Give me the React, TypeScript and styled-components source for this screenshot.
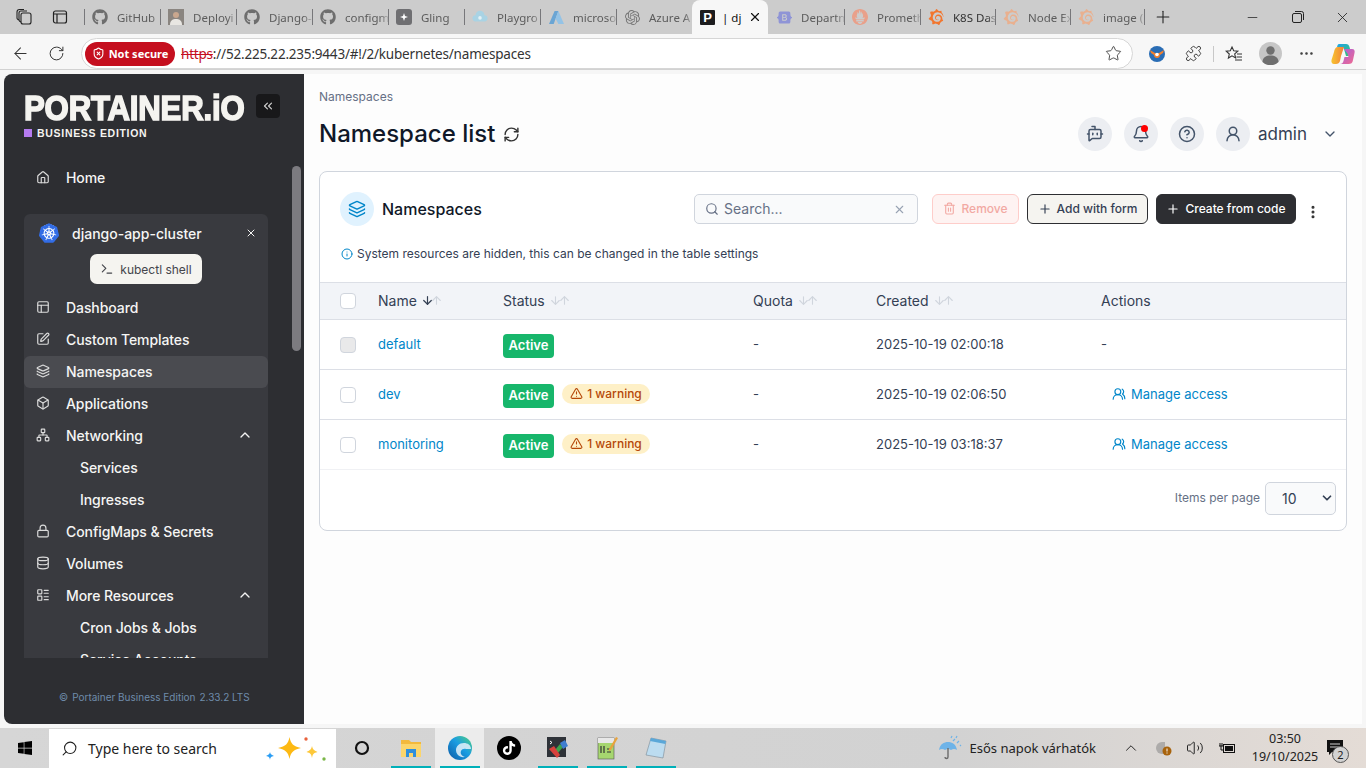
import * as React from 'react';
import styled, { createGlobalStyle } from 'styled-components';
import {
  ArrowDown, ArrowLeft, ArrowUp, BotMessageSquare, Bell, Box, ChevronDown, ChevronUp, ChevronsLeft,
  CircleHelp, Database, EllipsisVertical, Ellipsis, Info, Layers, LayoutList, Lock, Minus, Network,
  PanelsTopLeft, Plus, Puzzle, RefreshCw, RotateCw, Search, ShieldX, SquarePen, Star, Terminal, Trash2,
  TriangleAlert, House, UserRound, UsersRound, Volume2, X,
} from 'lucide-react';
import { FaGithub, FaTiktok, FaWindows } from 'react-icons/fa';
import { SiGrafana, SiKubernetes, SiOpenai, SiPrometheus, SiBootstrap } from 'react-icons/si';

const GlobalStyle = createGlobalStyle`
  html, body { margin: 0; padding: 0; overflow: hidden; }
  * { box-sizing: border-box; }
  body { font-family: Inter, "Liberation Sans", sans-serif; }
`;

const Screen = styled.div`
  width: 1366px;
  height: 768px;
  display: flex;
  flex-direction: column;
  overflow: hidden;
  background: #f6f6f6;
`;

/* browser chrome */
const TabStrip = styled.div`
  height: 34px;
  display: flex;
  align-items: center;
  background: #cccccc;
  font-family: "Noto Sans", sans-serif;
  font-size: 11.5px;
`;

const StripIcons = styled.div`
  width: 84px;
  display: flex;
  align-items: center;
  padding-left: 15px;
  gap: 19px;
  color: #222;
`;

const Tab = styled.div<{ $w: number; $sep: boolean; $end?: boolean }>`
  width: ${(p) => p.$w}px;
  height: 16px;
  flex: none;
  display: flex;
  align-items: center;
  gap: 9px;
  padding-left: 7px;
  border-left: 1px solid ${(p) => (p.$sep ? '#77777a' : 'transparent')};
  border-right: ${(p) => (p.$end ? '1px solid #77777a' : 'none')};
`;

const TabIcon = styled.div`
  width: 16px;
  height: 16px;
  flex: none;
  display: flex;
  align-items: center;
  justify-content: center;
`;

const TabLabel = styled.div<{ $dark?: boolean }>`
  width: 43px;
  overflow: hidden;
  white-space: nowrap;
  color: ${(p) => (p.$dark ? '#333' : '#5c5c5c')};
  mask-image: linear-gradient(to right, #000 80%, rgba(0, 0, 0, 0.25));
`;

const ActiveTab = styled.div`
  width: 76px;
  height: 34px;
  flex: none;
  display: flex;
  align-items: center;
  padding-left: 8px;
  background: #f7f7f7;
  border-radius: 8px 8px 0 0;
  color: #111;
`;

const PortainerFav = styled.div`
  width: 15px;
  height: 15px;
  flex: none;
  background: #1c1c1e;
  color: #fff;
  font-family: "Liberation Sans", sans-serif;
  font-weight: 700;
  font-size: 13px;
  line-height: 15px;
  text-align: center;
  border-radius: 1px;
`;

const ActiveLabel = styled.div`
  width: 26px;
  margin-left: 7px;
  white-space: nowrap;
  overflow: hidden;
`;

const NewTab = styled.div`
  width: 36px;
  display: flex;
  justify-content: center;
  color: #222;
`;

const WindowControls = styled.div`
  margin-left: auto;
  margin-right: 1px;
  display: flex;
  color: #222;
`;

const WindowButton = styled.div`
  width: 45px;
  display: flex;
  justify-content: center;
  align-items: center;
`;

const Toolbar = styled.div`
  height: 36px;
  display: flex;
  align-items: center;
  padding: 4px 0 0 2px;
  background: #f7f7f7;
  border-bottom: 1px solid #d2d2d2;
  color: #333;
`;

const ToolButton = styled.div<{ $w?: number }>`
  width: ${(p) => p.$w ?? 36}px;
  height: 30px;
  flex: none;
  display: flex;
  align-items: center;
  justify-content: center;
`;

const Omnibox = styled.div`
  width: 1052px;
  height: 31px;
  margin: 0 6px 0 7px;
  flex: none;
  display: flex;
  align-items: center;
  padding: 0 10px 0 3px;
  background: #fff;
  border: 1px solid #d6d6d6;
  border-radius: 16px;
  font-family: "Noto Sans", sans-serif;
  font-size: 13.5px;
  color: #333;
`;

const NotSecure = styled.div`
  width: 90px;
  height: 24px;
  flex: none;
  display: flex;
  align-items: center;
  justify-content: center;
  gap: 4px;
  background: #c50f1f;
  color: #fff;
  border-radius: 12px;
  font-size: 11px;
  font-weight: 700;
`;

const Url = styled.div`
  margin-left: 6px;
  letter-spacing: -0.2px;
  flex: 1;
  white-space: nowrap;
`;

const Scheme = styled.span`
  color: #c50f1f;
  text-decoration: line-through;
`;

const Divider = styled.div`
  width: 5px;
  flex: none;
  display: flex;
  justify-content: center;
  &::after {
    content: '';
    width: 1px;
    height: 16px;
    background: #c8c8c8;
  }
`;

/* page */
const Body = styled.div`
  flex: 1;
  min-height: 0;
  display: flex;
  padding: 4px;
`;

const Sidebar = styled.aside`
  width: 300px;
  flex: none;
  display: flex;
  flex-direction: column;
  padding-left: 20px;
  background: #2d2e32;
  border-radius: 8px 0 0 8px;
  color: #f5f5f4;
  font-size: 14px;
`;

const Brand = styled.div`
  height: 88px;
  padding-top: 20px;
  display: flex;
  align-items: flex-start;
`;

const BrandText = styled.div`
  width: 220px;
`;

const Logo = styled.div`
  font-family: "Liberation Sans", sans-serif;
  font-weight: 700;
  font-size: 35px;
  line-height: 27px;
  height: 27px;
  white-space: nowrap;
  color: #f5f4f0;
  -webkit-text-stroke: 1.6px #f5f4f0;
  letter-spacing: -0.2px;
  transform: scaleX(0.89);
  transform-origin: left center;
`;

const Edition = styled.div`
  margin-top: 6px;
  display: flex;
  align-items: center;
  gap: 5px;
  font-family: "Liberation Sans", sans-serif;
  font-size: 10.5px;
  font-weight: 700;
  letter-spacing: 0.7px;
  color: #f5f4f0;
`;

const PurpleSquare = styled.span`
  width: 8px;
  height: 8px;
  background: #b57bf0;
`;

const Collapse = styled.div`
  width: 24px;
  height: 24px;
  margin: 0 0 0 12px;
  display: flex;
  align-items: center;
  justify-content: center;
  background: #18181a;
  border-radius: 4px;
  color: #d0d0d0;
`;

const NavWrap = styled.div`
  height: 496px;
  display: flex;
  gap: 24px;
`;

const NavColumn = styled.nav`
  width: 244px;
  flex: none;
  overflow: hidden;
`;

const ScrollThumb = styled.div`
  width: 9px;
  height: 185px;
  margin-top: 4px;
  border-radius: 5px;
  background: #7c7b80;
`;

const NavRow = styled.div<{ $active?: boolean; $sub?: boolean }>`
  height: 32px;
  display: flex;
  align-items: center;
  gap: 16px;
  padding: 0 15px 2px ${(p) => (p.$sub ? 56 : 12)}px;
  font-weight: 500;
  letter-spacing: -0.08px;
  border-radius: 6px;
  background: ${(p) => (p.$active ? '#4a4b50' : 'transparent')};
  color: #f5f5f4;
`;

const NavIcon = styled.span`
  width: 14px;
  display: flex;
  justify-content: center;
  color: #dcdcdc;
`;

const NavLabel = styled.span`
  flex: 1;
`;

const ClusterBox = styled.div`
  margin-top: 20px;
  padding-top: 4px;
  background: #393a3f;
  border-radius: 6px 6px 0 0;
  min-height: 500px;
`;

const ClusterRow = styled.div`
  height: 32px;
  display: flex;
  align-items: center;
  padding: 0 11px 2px 15px;
  font-weight: 500;
`;

const KubeMark = styled.span`
  display: flex;
  border-radius: 50%;
  background: radial-gradient(circle, #fff 60%, transparent 64%);
`;

const ClusterName = styled.span`
  flex: 1;
  margin-left: 13px;
`;

const ShellRow = styled.div`
  margin: 4px 0 8px;
  display: flex;
  justify-content: center;
`;

const ShellButton = styled.div`
  width: 112px;
  height: 30px;
  display: flex;
  align-items: center;
  justify-content: center;
  gap: 6px;
  background: #f5f4f0;
  color: #44454b;
  border-radius: 7px;
  font-size: 12px;
  font-weight: 400;
`;

const SideFooter = styled.div`
  margin-top: 32px;
  padding-left: 35px;
  display: flex;
  align-items: center;
  gap: 4px;
  font-size: 10px;
  line-height: 14px;
  color: #6f8cab;
  white-space: nowrap;
`;

const Main = styled.main`
  flex: 1;
  padding: 15px 15px 0;
  background: #fdfdfd;
`;

const Crumb = styled.div`
  font-size: 12px;
  line-height: 16px;
  color: #667085;
`;

const TitleRow = styled.div`
  height: 34px;
  margin-top: 12px;
  display: flex;
  align-items: center;
`;

const Title = styled.h1`
  margin: 0 8px 2px 0;
  font-size: 24px;
  font-weight: 500;
  color: #101828;
`;

const TopActions = styled.div`
  margin-left: auto;
  display: flex;
  align-items: center;
  gap: 12px;
  color: #44546a;
`;

const RoundButton = styled.div`
  width: 34px;
  height: 34px;
  position: relative;
  display: flex;
  align-items: center;
  justify-content: center;
  background: #eceef2;
  border-radius: 50%;
`;

const RedDot = styled.span`
  position: absolute;
  top: 8px;
  right: 10px;
  width: 7px;
  height: 7px;
  border-radius: 50%;
  background: #f00;
`;

const UserName = styled.span`
  margin: 0 0 1px -4px;
  font-size: 17px;
  color: #344054;
`;

const UserChevron = styled.span`
  display: flex;
  margin: 0 9px 0 3px;
`;

const Card = styled.section`
  margin-top: 20px;
  background: #fff;
  border: 1px solid #d0d5dd;
  border-radius: 8px;
`;

const CardHead = styled.div`
  padding: 20px 16px 0 20px;
  display: flex;
  align-items: center;
`;

const CardBadge = styled.div`
  width: 34px;
  height: 34px;
  flex: none;
  display: flex;
  align-items: center;
  justify-content: center;
  border-radius: 50%;
  background: #e0f2fe;
  color: #0086c9;
`;

const CardTitle = styled.div`
  margin-left: 8px;
  font-size: 16px;
  font-weight: 500;
  color: #101828;
`;

const SearchBox = styled.div`
  width: 224px;
  height: 30px;
  margin-left: auto;
  display: flex;
  align-items: center;
  padding: 0 11px 0 10px;
  gap: 5px;
  background: #f9fafb;
  border: 1px solid #d0d5dd;
  border-radius: 5px;
  font-size: 14px;
  color: #667085;
`;

const SearchText = styled.span`
  flex: 1;
  padding-bottom: 1px;
`;

const ActionButton = styled.div<{ $kind: 'danger' | 'light' | 'dark'; $w: number; $ml: number }>`
  width: ${(p) => p.$w}px;
  height: 30px;
  margin-left: ${(p) => p.$ml}px;
  flex: none;
  display: flex;
  align-items: center;
  justify-content: center;
  gap: 5px;
  padding-bottom: 1px;
  font-size: 12px;
  font-weight: 500;
  border-radius: 6px;
  border: 1px solid ${(p) => (p.$kind === 'danger' ? '#fecdca' : '#2d2e32')};
  background: ${(p) =>
    p.$kind === 'danger' ? '#fef3f2' : p.$kind === 'light' ? '#f5f4f0' : '#2d2e32'};
  color: ${(p) =>
    p.$kind === 'danger' ? '#f2a9a3' : p.$kind === 'light' ? '#344054' : '#fff'};
`;

const Kebab = styled.div`
  width: 34px;
  display: flex;
  justify-content: center;
  padding-top: 6px;
  color: #333;
`;

const InfoLine = styled.div`
  margin-top: 19px;
  padding: 0 0 19px 21px;
  display: flex;
  align-items: center;
  gap: 4px;
  font-size: 12px;
  line-height: 18px;
  color: #344054;
`;

const TableRow = styled.div<{ $head?: boolean; $faint?: boolean }>`
  display: grid;
  grid-template-columns: 58px 125px 250px 123px 225px 1fr;
  align-items: center;
  height: ${(p) => (p.$head ? 38 : 50)}px;
  font-size: 13px;
  color: #344054;
  background: ${(p) => (p.$head ? '#f2f4f8' : '#fff')};
  border-top: ${(p) => (p.$head ? '1px solid #dcdfe6' : 'none')};
  border-bottom: 1px solid ${(p) => (p.$faint ? '#f0f1f4' : '#dcdfe6')};
`;

const CheckCell = styled.div`
  padding-left: 20px;
  display: flex;
`;

const CheckBox = styled.span<{ $disabled?: boolean }>`
  width: 16px;
  height: 16px;
  border-radius: 4px;
  border: 1px solid #d0d5dd;
  background: ${(p) => (p.$disabled ? '#e9e9ea' : '#fff')};
`;

const HeadCell = styled.div`
  display: flex;
  align-items: center;
  font-size: 14px;
  gap: 4px;
  padding-bottom: 2px;
`;

const SortArrows = styled.span`
  display: flex;
  color: #d0d5dd;
  & > svg {
    margin-left: -4px;
  }
`;

const SortDown = styled.span<{ $on?: boolean }>`
  display: flex;
  color: ${(p) => (p.$on ? '#344054' : 'inherit')};
`;

const Cell = styled.div`
  padding-bottom: 2px;
`;

const NameLink = styled.a`
  padding-bottom: 2px;
  color: #0086c9;
  text-decoration: none;
`;

const StatusCell = styled.div`
  display: flex;
  align-items: center;
  gap: 8px;
`;

const ActiveBadge = styled.span`
  width: 51px;
  height: 24px;
  margin-top: 2px;
  padding-bottom: 1px;
  display: flex;
  align-items: center;
  justify-content: center;
  background: #17b66b;
  color: #fff;
  border-radius: 4px;
  font-size: 13px;
  font-weight: 600;
`;

const WarnPill = styled.span`
  width: 88px;
  height: 20px;
  margin-bottom: 1px;
  padding-bottom: 1px;
  display: flex;
  align-items: center;
  justify-content: center;
  gap: 4px;
  background: #fef0c7;
  color: #b54708;
  border-radius: 10px;
  font-size: 12px;
  font-weight: 500;
`;

const ManageLink = styled.a`
  padding: 0 0 1px 11px;
  display: flex;
  align-items: center;
  gap: 5px;
  color: #0086c9;
  text-decoration: none;
`;

const TableFoot = styled.div`
  padding: 12px 10px 15px;
  display: flex;
  justify-content: flex-end;
  align-items: center;
  gap: 5px;
  font-size: 12px;
  color: #667085;
`;

const FootLabel = styled.span`
  padding-bottom: 3px;
`;

const PageSize = styled.div`
  width: 71px;
  height: 33px;
  display: flex;
  align-items: center;
  justify-content: space-between;
  padding: 0 1px 1px 16px;
  background: #f9fafb;
  border: 1px solid #d0d5dd;
  border-radius: 5px;
  font-size: 14px;
  color: #344054;
`;

/* taskbar */
const Taskbar = styled.footer`
  height: 40px;
  flex: none;
  display: flex;
  align-items: stretch;
  background: linear-gradient(90deg, #d6d6d6 0%, #d2d2d2 70%, #e4dcd6 100%);
  font-family: "Noto Sans", sans-serif;
  color: #111;
`;

const StartButton = styled.div`
  width: 49px;
  display: flex;
  align-items: center;
  justify-content: center;
  color: #000;
`;

const TaskSearch = styled.div`
  width: 287px;
  margin: 1px 1px 0 0;
  display: flex;
  align-items: center;
  padding-left: 12px;
  gap: 10px;
  background: #fff;
  font-size: 14px;
  color: #222;
  white-space: nowrap;
`;

const Flipped = styled.span`
  display: flex;
  transform: scaleX(-1);
`;

const Sparkles = styled.span`
  display: flex;
  margin-left: 38px;
`;

const TaskSlot = styled.div<{ $open?: boolean; $active?: boolean }>`
  width: 49px;
  position: relative;
  display: flex;
  align-items: center;
  justify-content: center;
  background: ${(p) => (p.$active ? '#ececec' : 'transparent')};
  &::after {
    content: '';
    position: absolute;
    left: 5px;
    right: 4px;
    bottom: 0;
    height: 2px;
    background: ${(p) => (p.$open ? '#00b0b9' : 'transparent')};
  }
`;

const Tray = styled.div`
  margin: 0 16px 0 auto;
  display: flex;
  align-items: center;
  font-size: 13px;
  color: #222;
`;

const Weather = styled.div`
  display: flex;
  align-items: center;
  gap: 7px;
  margin-right: 19px;
  white-space: nowrap;
`;

const TrayIcon = styled.div`
  width: 32px;
  display: flex;
  justify-content: center;
`;

const Clock = styled.div`
  width: 70px;
  margin-left: 7px;
  text-align: center;
  font-size: 12.5px;
  line-height: 18px;
`;

const Notify = styled.div`
  width: 30px;
  position: relative;
  display: flex;
  justify-content: center;
`;

const NotifyCount = styled.span`
  position: absolute;
  top: 7px;
  left: 12px;
  width: 17px;
  height: 17px;
  border-radius: 50%;
  background: #d2d2d2;
  border: 1px solid #555;
  font-size: 11px;
  line-height: 15px;
  text-align: center;
`;

const TikTokBadge = styled.div`
  width: 24px;
  height: 24px;
  display: flex;
  align-items: center;
  justify-content: center;
  border-radius: 50%;
  background: #000;
  color: #fff;
`;

const GithubFav = () => <FaGithub size={16} color="#6e6e6e" />;

const AvatarFav = () => (
  <svg width="16" height="16" viewBox="0 0 16 16">
    <rect width="16" height="16" fill="#8a8580" />
    <circle cx="8" cy="6" r="3" fill="#c9a78e" />
    <path d="M2 16c0-5 3-6 6-6s6 1 6 6z" fill="#e8e6e2" />
  </svg>
);

const GlingFav = () => (
  <svg width="16" height="16" viewBox="0 0 16 16">
    <rect width="16" height="16" rx="3" fill="#6f6f72" />
    <path d="M8 4l1 3 3 1-3 1-1 3-1-3-3-1 3-1z" fill="#fff" />
  </svg>
);

const CloudFav = () => (
  <svg width="18" height="14" viewBox="0 0 18 14">
    <path d="M4 12a3.5 3.5 0 0 1 0-7 5 5 0 0 1 10 0 3.5 3.5 0 0 1 0 7z" fill="#a9d3e4" />
    <circle cx="9" cy="8" r="2" fill="#e3f1f6" />
  </svg>
);

const AzureFav = () => (
  <svg width="15" height="15" viewBox="0 0 16 16">
    <path d="M6 1h4l-5 14H0z" fill="#6aa5d4" />
    <path d="M10 1l6 14h-6L7 9z" fill="#94c3e6" />
  </svg>
);

const tabs = [
  { label: 'GitHub', icon: <GithubFav /> },
  { label: 'Deployi', icon: <AvatarFav /> },
  { label: 'Django-', icon: <GithubFav /> },
  { label: 'configm', icon: <GithubFav /> },
  { label: 'Gling', icon: <GlingFav /> },
  { label: 'Playgro', icon: <CloudFav /> },
  { label: 'microso', icon: <AzureFav /> },
  { label: 'Azure A', icon: <SiOpenai size={15} color="#777" /> },
];

const tabsAfter = [
  { label: 'Departn', icon: <SiBootstrap size={15} color="#8f94d6" />, sep: false, w: 76 },
  { label: 'Prometh', icon: <SiPrometheus size={16} color="#e9a08a" />, sep: true, w: 76 },
  { label: 'K8S Das', icon: <SiGrafana size={16} color="#f2762e" />, sep: true, w: 75, dark: true },
  { label: 'Node Ex', icon: <SiGrafana size={16} color="#e9b08f" />, sep: true, w: 75 },
  { label: 'image (', icon: <SiGrafana size={16} color="#e9b08f" />, sep: true, w: 75, end: true },
];

const VerticalTabsIcon = () => (
  <svg width="16" height="16" viewBox="0 0 16 16" fill="none" stroke="currentColor" strokeWidth="1.2">
    <rect x="1.5" y="2" width="13" height="12" rx="2" />
    <path d="M1.5 5h13M5 5v9" />
  </svg>
);

const WorkspacesIcon = () => (
  <svg width="18" height="18" viewBox="0 0 18 18" fill="none" stroke="currentColor" strokeWidth="1.1">
    <rect x="6" y="5" width="10" height="11" rx="2" />
    <path d="M6 14c-1.5-.5-2-1-2-2V5c0-1 1-2 2-2h6M3.5 12C2.5 11 2 11 2 10V4c0-1.5 1-2.5 2.5-2.5H9" />
  </svg>
);

const RestoreIcon = () => (
  <svg width="12" height="12" viewBox="0 0 12 12" fill="none" stroke="currentColor">
    <rect x="0.5" y="2.5" width="9" height="9" rx="1.5" />
    <path d="M3 .5h6.5a2 2 0 0 1 2 2V9" />
  </svg>
);

const FavoritesIcon = () => (
  <svg width="18" height="18" viewBox="0 0 18 18" fill="none" stroke="currentColor" strokeWidth="1.1">
    <path d="M7 2l1.7 3.8 4.1.4-3.1 2.7.9 4L7 10.8 3.4 13l.9-4L1.2 6.2l4.1-.4z" />
    <path d="M12 9h5M11.5 12h5.5M10 15h7" />
  </svg>
);

const ExtensionDot = () => (
  <svg width="18" height="18" viewBox="0 0 18 18">
    <circle cx="9" cy="9" r="8" fill="#2a6db5" />
    <path d="M2 5l5 3h4l5-3-1 3-3 2a3 3 0 0 1-6 0L3 8z" fill="#f07f2e" />
    <circle cx="9" cy="9.5" r="1.8" fill="#fff" />
  </svg>
);

const ProfileIcon = () => (
  <svg width="23" height="23" viewBox="0 0 23 23">
    <circle cx="11.5" cy="11.5" r="11.5" fill="#c6c6c6" />
    <circle cx="11.5" cy="8.5" r="4.2" fill="#6f6f6f" />
    <path d="M3.5 20c0-5 4-6.5 8-6.5s8 1.5 8 6.5a11.5 11.5 0 0 1-16 0z" fill="#6f6f6f" />
  </svg>
);

const CopilotIcon = () => (
  <svg width="24" height="24" viewBox="0 0 24 24">
    <defs>
      <linearGradient id="copA" x1="0" y1="0" x2="1" y2="1">
        <stop offset="0" stopColor="#1fa4e8" />
        <stop offset="1" stopColor="#3ac66a" />
      </linearGradient>
      <linearGradient id="copB" x1="0" y1="0" x2="1" y2="1">
        <stop offset="0" stopColor="#a55fe0" />
        <stop offset="1" stopColor="#f26a8d" />
      </linearGradient>
      <linearGradient id="copC" x1="0" y1="0" x2="1" y2="0">
        <stop offset="0" stopColor="#f7c42e" />
        <stop offset="1" stopColor="#f2803a" />
      </linearGradient>
    </defs>
    <path d="M8 2h7c2 0 3 1 3.5 3L21 14l-6 0-2-7c-.5-1.5-1.5-2-3-2H6c.5-2 1-3 2-3z" fill="url(#copA)" />
    <path d="M3 10c.5-3 1.5-5 4-5h3l3 0-3 9-1 5c-.5 2-2 3-4 3H3c-2 0-3-2-2.5-4z" fill="url(#copC)" />
    <path d="M13 7l8 0c2.5 0 3 2 2.5 4l-1.5 7c-.5 3-2 4-4.5 4H9c2 0 3-1 3.5-3l1-4h4l-1-3.5z" fill="url(#copB)" />
  </svg>
);

const SparkleIcons = () => (
  <svg width="64" height="30" viewBox="0 0 64 30">
    <path d="M24.5 3c1.5 7 3.5 9 11.500 11-8 2-10 4-11.500 11-1.500-7-3.500-9-11.500-11 8-2 10-4 11.500-11z" fill="#fdb913" />
    <path d="M47 12c.7 3 1.5 4 5.5 6-4 1-4.800 2-5.500 6-.7-4-1.500-5-5.500-6 4-2 4.800-3 5.500-6z" fill="#fdc83a" />
    <path d="M5 18c.4 2 1 2.600 4 4-3 .6-3.600 1.200-4 4-.4-2.800-1-3.400-4-4 3-1.400 3.600-2 4-4z" fill="#2a9df4" />
    <circle cx="41" cy="5" r="1.7" fill="#e8613c" />
    <circle cx="59" cy="25" r="1.7" fill="#7ab648" />
  </svg>
);

const FolderIcon = () => (
  <svg width="22" height="20" viewBox="0 0 22 20">
    <path d="M1 2h8l2 2h10v15H1z" fill="#f3b93c" />
    <path d="M1 6h20v13H1z" fill="#fbd56b" />
    <path d="M6 11h10v8h-3v-4H9v4H6z" fill="#2f8fdc" />
  </svg>
);

const EdgeIcon = () => (
  <svg width="24" height="24" viewBox="0 0 24 24">
    <defs>
      <linearGradient id="edgeG" x1="0" y1="1" x2="1" y2="0">
        <stop offset="0" stopColor="#0c59a4" />
        <stop offset="0.55" stopColor="#1b9de2" />
        <stop offset="1" stopColor="#52d17c" />
      </linearGradient>
    </defs>
    <circle cx="12" cy="12" r="12" fill="url(#edgeG)" />
    <path d="M23 13c0-4-3.5-6-7-6-5 0-8 3.5-8 7 0 4 3.5 8 9 7-3.5-1-5-3.5-4-6 .7-1.8 3-2.5 5-2z" fill="#d9ecf7" opacity="0.9" />
  </svg>
);

const WinMergeIcon = () => (
  <svg width="24" height="24" viewBox="0 0 24 24">
    <rect x="1" y="1" width="19" height="20" fill="#2e3238" />
    <path d="M4 5l2 1.5L4 8" stroke="#fff" fill="none" />
    <path d="M9 14l5-6 3 3-5 6z" fill="#3da34c" />
    <path d="M3 13l5-3 6 9-3 3z" fill="#d8423c" />
    <path d="M14 7l5-3 3 6-5 3z" fill="#3f7fd0" />
  </svg>
);

const NotepadPlusIcon = () => (
  <svg width="24" height="26" viewBox="0 0 24 26">
    <rect x="3" y="3" width="16" height="21" fill="#a6d66f" stroke="#555" strokeWidth="0.6" />
    <rect x="3" y="3" width="16" height="5" fill="#e8e8e8" />
    <path d="M6 11v7M9 11v7M12 14h4M12 17h4" stroke="#333" strokeWidth="1.2" />
    <path d="M14 14l7-12 2 1-7 12-2 1z" fill="#e8a33d" />
  </svg>
);

const NotepadIcon = () => (
  <svg width="24" height="24" viewBox="0 0 24 24">
    <path d="M7 2l15 3-3 17-17-3z" fill="#bcdcf0" stroke="#7a8a96" strokeWidth="0.6" />
    <path d="M7 2l15 3-.7 3L6 5z" fill="#5aa7d8" />
  </svg>
);

const UmbrellaIcon = () => (
  <svg width="24" height="26" viewBox="0 0 24 26">
    <path d="M1 15c1-6 5-8 9-8s8 2 9 8c-2-1.5-4-1.5-6 0-2-1.5-4-1.5-6 0-2-1.5-4-1.5-6 0z" fill="#6db3e8" />
    <path d="M10 13v9c0 2-3 2-3 0" stroke="#6b6b6b" strokeWidth="1.4" fill="none" />
    <path d="M15 6l2-2M19 8l2-2M13 3l1-2M18 3l1-2M22 11l1-1" stroke="#6db3e8" strokeWidth="1.2" />
  </svg>
);

const NetworkTrayIcon = () => (
  <svg width="18" height="16" viewBox="0 0 18 16">
    <path d="M8 2a6 6 0 1 0 0 12h3V2z" fill="#8d8d8d" opacity="0.6" />
    <circle cx="13" cy="11" r="4.5" fill="#a8630c" />
    <path d="M13 8.5v3M13 12.5v1" stroke="#fff" />
  </svg>
);

const BatteryIcon = () => (
  <svg width="18" height="14" viewBox="0 0 18 14" fill="none" stroke="#111">
    <rect x="5.5" y="3.5" width="11" height="8" />
    <rect x="7" y="5" width="8" height="5" fill="#111" stroke="none" />
    <path d="M1 5h4M2 2v3M4 2v3M3 5v4h3" />
  </svg>
);

const MessageIcon = () => (
  <svg width="18" height="18" viewBox="0 0 18 18">
    <path d="M1 1h16v12H6l-3 3v-3H1z" fill="#111" />
    <path d="M4 5h10M4 8h10" stroke="#d2d2d2" />
  </svg>
);

const navTop = [
  { label: 'Dashboard', icon: <PanelsTopLeft size={16} /> },
  { label: 'Custom Templates', icon: <SquarePen size={16} /> },
  { label: 'Namespaces', icon: <Layers size={16} />, active: true },
  { label: 'Applications', icon: <Box size={16} /> },
  { label: 'Networking', icon: <Network size={16} />, open: true },
  { label: 'Services', sub: true },
  { label: 'Ingresses', sub: true },
  { label: 'ConfigMaps & Secrets', icon: <Lock size={16} /> },
  { label: 'Volumes', icon: <Database size={16} /> },
  { label: 'More Resources', icon: <LayoutList size={16} />, open: true },
  { label: 'Cron Jobs & Jobs', sub: true },
  { label: 'Service Accounts', sub: true },
];

const namespaces = [
  { name: 'default', created: '2025-10-19 02:00:18', system: true },
  { name: 'dev', created: '2025-10-19 02:06:50' },
  { name: 'monitoring', created: '2025-10-19 03:18:37' },
];

const Sort = ({ on }: { on?: boolean }) => (
  <SortArrows>
    <SortDown $on={on}>
      <ArrowDown size={13} strokeWidth={on ? 2.2 : 2} />
    </SortDown>
    <ArrowUp size={13} />
  </SortArrows>
);

const App = () => (
  <Screen>
    <GlobalStyle />
    <TabStrip>
      <StripIcons>
        <WorkspacesIcon />
        <VerticalTabsIcon />
      </StripIcons>
      {tabs.map((t) => (
        <Tab key={t.label} $w={76} $sep>
          <TabIcon>{t.icon}</TabIcon>
          <TabLabel>{t.label}</TabLabel>
        </Tab>
      ))}
      <ActiveTab>
        <PortainerFav>P</PortainerFav>
        <ActiveLabel>| dj</ActiveLabel>
        <X size={14} />
      </ActiveTab>
      {tabsAfter.map((t) => (
        <Tab key={t.label} $w={t.w} $sep={t.sep} $end={t.end}>
          <TabIcon>{t.icon}</TabIcon>
          <TabLabel $dark={t.dark}>{t.label}</TabLabel>
        </Tab>
      ))}
      <NewTab>
        <Plus size={20} strokeWidth={1.3} />
      </NewTab>
      <WindowControls>
        <WindowButton>
          <Minus size={15} strokeWidth={1.2} />
        </WindowButton>
        <WindowButton>
          <RestoreIcon />
        </WindowButton>
        <WindowButton>
          <X size={17} strokeWidth={1.2} />
        </WindowButton>
      </WindowControls>
    </TabStrip>

    <Toolbar>
      <ToolButton>
        <ArrowLeft size={19} strokeWidth={1.3} />
      </ToolButton>
      <ToolButton>
        <RotateCw size={17} strokeWidth={1.4} />
      </ToolButton>
      <Omnibox>
        <NotSecure>
          <ShieldX size={13} />
          Not secure
        </NotSecure>
        <Url>
          <Scheme>https</Scheme>://52.225.22.235:9443/#!/2/kubernetes/namespaces
        </Url>
        <Star size={17} strokeWidth={1.2} />
      </Omnibox>
      <ToolButton>
        <ExtensionDot />
      </ToolButton>
      <ToolButton>
        <Puzzle size={17} strokeWidth={1.3} />
      </ToolButton>
      <Divider />
      <ToolButton>
        <FavoritesIcon />
      </ToolButton>
      <ToolButton>
        <ProfileIcon />
      </ToolButton>
      <ToolButton>
        <Ellipsis size={17} strokeWidth={1.6} />
      </ToolButton>
      <ToolButton $w={38}>
        <CopilotIcon />
      </ToolButton>
    </Toolbar>

    <Body>
      <Sidebar>
        <Brand>
          <BrandText>
            <Logo>PORTAINER.iO</Logo>
            <Edition>
              <PurpleSquare />
              BUSINESS EDITION
            </Edition>
          </BrandText>
          <Collapse>
            <ChevronsLeft size={14} />
          </Collapse>
        </Brand>
        <NavWrap>
          <NavColumn>
            <NavRow>
              <NavIcon>
                <House size={15} />
              </NavIcon>
              <NavLabel>Home</NavLabel>
            </NavRow>
            <ClusterBox>
              <ClusterRow>
                <KubeMark>
                  <SiKubernetes size={20} color="#326ce5" />
                </KubeMark>
                <ClusterName>django-app-cluster</ClusterName>
                <X size={12} />
              </ClusterRow>
              <ShellRow>
                <ShellButton>
                  <Terminal size={14} />
                  kubectl shell
                </ShellButton>
              </ShellRow>
              {navTop.map((n) => (
                <NavRow key={n.label} $active={n.active} $sub={n.sub}>
                  {n.icon && <NavIcon>{n.icon}</NavIcon>}
                  <NavLabel>{n.label}</NavLabel>
                  {n.open && <ChevronUp size={16} />}
                </NavRow>
              ))}
            </ClusterBox>
          </NavColumn>
          <ScrollThumb />
        </NavWrap>
        <SideFooter>
          <span>©</span>
          <span>Portainer Business Edition</span>
          <span>2.33.2 LTS</span>
        </SideFooter>
      </Sidebar>

      <Main>
        <Crumb>Namespaces</Crumb>
        <TitleRow>
          <Title>Namespace list</Title>
          <RefreshCw size={17} color="#333" />
          <TopActions>
            <RoundButton>
              <BotMessageSquare size={18} />
            </RoundButton>
            <RoundButton>
              <Bell size={18} />
              <RedDot />
            </RoundButton>
            <RoundButton>
              <CircleHelp size={18} />
            </RoundButton>
            <RoundButton>
              <UserRound size={18} />
            </RoundButton>
            <UserName>admin</UserName>
            <UserChevron>
              <ChevronDown size={16} />
            </UserChevron>
          </TopActions>
        </TitleRow>

        <Card>
          <CardHead>
            <CardBadge>
              <Layers size={18} />
            </CardBadge>
            <CardTitle>Namespaces</CardTitle>
            <SearchBox>
              <Search size={14} />
              <SearchText>Search...</SearchText>
              <X size={13} color="#98a2b3" />
            </SearchBox>
            <ActionButton $kind="danger" $w={87} $ml={14}>
              <Trash2 size={13} />
              Remove
            </ActionButton>
            <ActionButton $kind="light" $w={121} $ml={8}>
              <Plus size={14} />
              Add with form
            </ActionButton>
            <ActionButton $kind="dark" $w={140} $ml={8}>
              <Plus size={14} />
              Create from code
            </ActionButton>
            <Kebab>
              <EllipsisVertical size={16} strokeWidth={2.6} />
            </Kebab>
          </CardHead>
          <InfoLine>
            <Info size={12} color="#0086c9" />
            System resources are hidden, this can be changed in the table settings
          </InfoLine>

          <TableRow $head>
            <CheckCell>
              <CheckBox />
            </CheckCell>
            <HeadCell>
              Name <Sort on />
            </HeadCell>
            <HeadCell>
              Status <Sort />
            </HeadCell>
            <HeadCell>
              Quota <Sort />
            </HeadCell>
            <HeadCell>
              Created <Sort />
            </HeadCell>
            <HeadCell>Actions</HeadCell>
          </TableRow>
          {namespaces.map((ns, i) => (
            <TableRow key={ns.name} $faint={i === namespaces.length - 1}>
              <CheckCell>
                <CheckBox $disabled={ns.system} />
              </CheckCell>
              <NameLink>{ns.name}</NameLink>
              <StatusCell>
                <ActiveBadge>Active</ActiveBadge>
                {!ns.system && (
                  <WarnPill>
                    <TriangleAlert size={13} />1 warning
                  </WarnPill>
                )}
              </StatusCell>
              <Cell>-</Cell>
              <Cell>{ns.created}</Cell>
              {ns.system ? (
                <Cell>-</Cell>
              ) : (
                <ManageLink>
                  <UsersRound size={14} />
                  Manage access
                </ManageLink>
              )}
            </TableRow>
          ))}
          <TableFoot>
            <FootLabel>Items per page</FootLabel>
            <PageSize>
              10
              <ChevronDown size={14} strokeWidth={3} />
            </PageSize>
          </TableFoot>
        </Card>
      </Main>
    </Body>

    <Taskbar>
      <StartButton>
        <FaWindows size={16} />
      </StartButton>
      <TaskSearch>
        <Flipped>
          <Search size={17} strokeWidth={1.5} />
        </Flipped>
        Type here to search
        <Sparkles>
          <SparkleIcons />
        </Sparkles>
      </TaskSearch>
      <TaskSlot>
        <svg width="16" height="16" viewBox="0 0 16 16" fill="none" stroke="#111" strokeWidth="2.2">
          <circle cx="8" cy="8" r="6" />
        </svg>
      </TaskSlot>
      <TaskSlot $open>
        <FolderIcon />
      </TaskSlot>
      <TaskSlot $open $active>
        <EdgeIcon />
      </TaskSlot>
      <TaskSlot>
        <TikTokBadge>
          <FaTiktok size={14} />
        </TikTokBadge>
      </TaskSlot>
      <TaskSlot $open>
        <WinMergeIcon />
      </TaskSlot>
      <TaskSlot $open>
        <NotepadPlusIcon />
      </TaskSlot>
      <TaskSlot $open>
        <NotepadIcon />
      </TaskSlot>
      <Tray>
        <Weather>
          <UmbrellaIcon />
          Esős napok várhatók
        </Weather>
        <TrayIcon>
          <ChevronUp size={18} strokeWidth={1.3} />
        </TrayIcon>
        <TrayIcon>
          <NetworkTrayIcon />
        </TrayIcon>
        <TrayIcon>
          <Volume2 size={18} strokeWidth={1.3} />
        </TrayIcon>
        <TrayIcon>
          <BatteryIcon />
        </TrayIcon>
        <Clock>
          <div>03:50</div>
          <div>19/10/2025</div>
        </Clock>
        <Notify>
          <MessageIcon />
          <NotifyCount>2</NotifyCount>
        </Notify>
      </Tray>
    </Taskbar>
  </Screen>
);

export default App;
